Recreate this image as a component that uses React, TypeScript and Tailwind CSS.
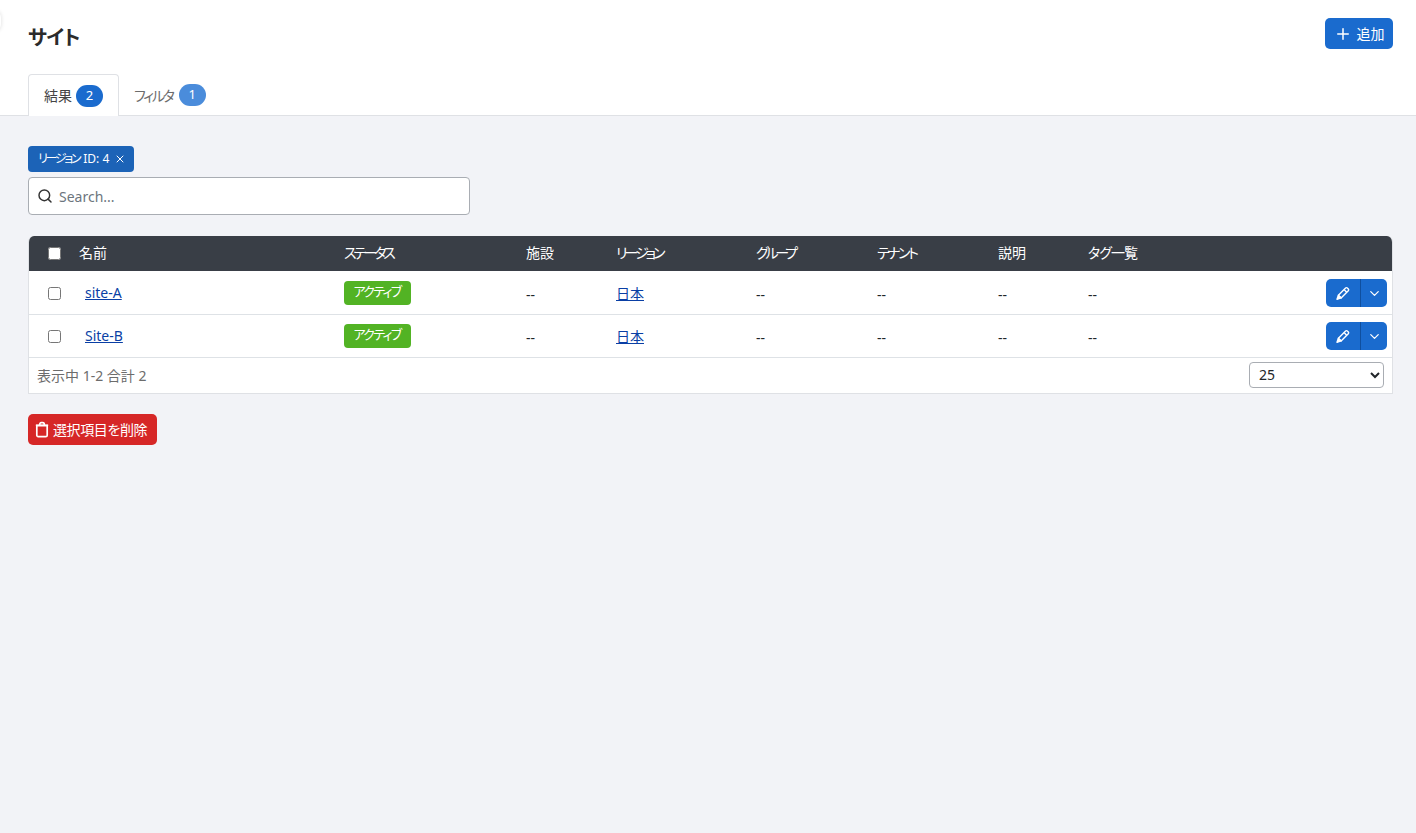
import { ChevronDown, Plus, Search, X } from "lucide-react";

const rows = [
  { name: "site-A" },
  { name: "Site-B" },
];

const headers = [
  { label: "ステータス", className: "tracking-[-3px]" },
  { label: "施設", className: "" },
  { label: "リージョン", className: "tracking-[-3px]" },
  { label: "グループ", className: "tracking-[-3.2px]" },
  { label: "テナント", className: "tracking-[-2.5px]" },
  { label: "説明", className: "" },
  { label: "タグ一覧", className: "tracking-[-1px]" },
];

function TrashIcon() {
  return (
    <svg viewBox="0 0 16 18" className="h-[17px] w-[16px]" fill="none" stroke="currentColor" strokeWidth="1.8">
      <path d="M2.5 5h11v10a1.5 1.5 0 0 1-1.5 1.5H4A1.5 1.5 0 0 1 2.5 15z" />
      <path d="M1.5 4.5h13M5.5 4c0-1.2.7-2.2 1.7-2.2h1.6c1 0 1.7 1 1.7 2.2" />
    </svg>
  );
}

function PencilIcon() {
  return (
    <svg viewBox="0 0 16 16" className="h-[16px] w-[16px]" fill="none" stroke="currentColor" strokeWidth="1.4" strokeLinejoin="round">
      <path d="M3.4 10.2 10.6 3a1.2 1.2 0 0 1 1.7 0l1 1a1.2 1.2 0 0 1 0 1.7l-7.2 7.2z" />
      <path d="m9 4.6 2.7 2.7" />
      <path d="M3.4 10.2 2 14.3l4.1-1.4z" fill="currentColor" />
    </svg>
  );
}

function Row({ name }: { name: string }) {
  const cell = "border-b border-[#dee2e6]";
  return (
    <tr className="h-[43px] bg-white text-[14px] text-[#212529]">
      <td className={`${cell} pb-[2px] text-center`}>
        <input type="checkbox" className="ml-[1px] h-[13px] w-[13px] align-middle" />
      </td>
      <td className={`${cell} pb-[2px] pl-[6px]`}>
        <a href="#" className="text-[#0a3fa5] underline">
          {name}
        </a>
      </td>
      <td className={cell}>
        <span className="flex h-[24px] w-[67px] items-center justify-center rounded-[4px] bg-[#52b324] pr-[1px] pb-[2px] text-[13px] tracking-[-1.7px] text-white">
          アクティブ
        </span>
      </td>
      <td className={`${cell} pt-[2px]`}>--</td>
      <td className={cell}>
        <a href="#" className="text-[#0a3fa5] underline">
          日本
        </a>
      </td>
      <td className={`${cell} pt-[2px]`}>--</td>
      <td className={`${cell} pt-[2px]`}>--</td>
      <td className={`${cell} pt-[2px]`}>--</td>
      <td className={`${cell} pt-[2px]`}>--</td>
      <td className={`${cell} pr-[5px]`}>
        <div className="flex justify-end">
          <button type="button" className="flex h-[28px] w-[35px] items-center justify-center rounded-l-[5px] border-r border-[#0f4f9e] bg-[#1a6bce] text-white">
            <PencilIcon />
          </button>
          <button type="button" className="flex h-[28px] w-[26px] items-center justify-center rounded-r-[5px] bg-[#1a6bce] text-white">
            <ChevronDown size={15} strokeWidth={2} />
          </button>
        </div>
      </td>
    </tr>
  );
}

export default function App() {
  return (
    <div className="relative min-h-[833px] overflow-hidden bg-[#f2f3f7] font-['Noto_Sans','Noto_Sans_CJK_JP',sans-serif] text-[#212529] [font-feature-settings:'palt']">
      <div className="absolute top-[10px] -left-[15px] h-[22px] w-[16px] rounded-full bg-white shadow-[0_0_4px_rgba(0,0,0,0.14)]" />

      <header className="h-[116px] border-b border-[#dfe1e5] bg-white pr-[23px] pl-[28px]">
        <div className="flex h-[74px] items-start justify-between">
          <h1 className="mt-[22px] text-[20px] leading-[32px] font-semibold tracking-[-0.7px] text-[#2b2b2b]">サイト</h1>
          <button type="button" className="mt-[18px] flex h-[31px] w-[68px] items-center justify-center gap-[5px] rounded-[5px] bg-[#1a6bce] text-[14px] text-white">
            <Plus size={18} strokeWidth={2} />
            追加
          </button>
        </div>
        <nav className="flex items-start text-[14px]">
          <div className="flex h-[42px] w-[91px] items-center justify-center gap-[4px] rounded-t-[4px] border border-b-0 border-[#dfe1e5] bg-white text-[#444]">
            結果
            <span className="flex h-[22px] w-[27px] items-center justify-center rounded-full bg-[#1a6bce] text-[13px] text-white">2</span>
          </div>
          <div className="flex h-[42px] items-center gap-[6px] pl-[15px] text-[#6c6c6c]">
            <span className="tracking-[-2.2px]">フィルタ</span>
            <span className="flex h-[22px] w-[27px] items-center justify-center rounded-full bg-[#4a8cdb] text-[13px] text-white">1</span>
          </div>
        </nav>
      </header>

      <main className="pt-[30px] pr-[23px] pl-[28px]">
        <span className="flex h-[26px] w-[106px] items-center gap-[5px] rounded-[4px] bg-[#1c63b7] pl-[10px] text-[12px] whitespace-nowrap text-white">
          <span>
            <span className="tracking-[-2.3px]">リージョン</span>
            <span className="ml-[4px]">ID: 4</span>
          </span>
          <X size={12} strokeWidth={2} />
        </span>

        <div className="mt-[5px] flex h-[38px] w-[442px] items-center gap-[6px] rounded-[4px] border border-[#a9adb3] bg-white pl-[8px]">
          <Search size={16} strokeWidth={2.2} className="text-[#333]" />
          <span className="text-[14px] text-[#6c757d]">Search...</span>
        </div>

        <div className="mt-[21px] overflow-hidden rounded-t-[6px] border-x border-b border-[#dfe1e5] bg-white">
          <table className="w-full table-fixed border-separate border-spacing-0">
            <colgroup>
              <col className="w-[50px]" />
              <col className="w-[265px]" />
              <col className="w-[182px]" />
              <col className="w-[90px]" />
              <col className="w-[140px]" />
              <col className="w-[121px]" />
              <col className="w-[121px]" />
              <col className="w-[90px]" />
              <col className="w-[120px]" />
              <col />
            </colgroup>
            <thead>
              <tr className="h-[36px] text-left text-[14px] text-white">
                <th className="border-b border-white bg-[#393e46] pb-[4px] text-center font-normal">
                  <input type="checkbox" className="ml-[1px] h-[13px] w-[13px] align-middle" />
                </th>
                <th className="border-b border-white bg-[#393e46] pb-[2px] font-normal">名前</th>
                {headers.map((h) => (
                  <th key={h.label} className={`border-b border-white bg-[#393e46] pb-[2px] font-normal ${h.className}`}>
                    {h.label}
                  </th>
                ))}
                <th className="border-b border-white bg-[#393e46]" />
              </tr>
            </thead>
            <tbody>
              {rows.map((row) => (
                <Row key={row.name} name={row.name} />
              ))}
            </tbody>
          </table>
          <div className="flex h-[35px] items-center justify-between px-[8px] text-[14px] text-[#6c6c6c]">
            <span>表示中 1-2 合計 2</span>
            <select defaultValue="25" className="mb-[2px] h-[26px] w-[135px] rounded-[4px] border border-[#a9adb3] bg-white pl-[5px] text-[14px] text-[#212529]">
              <option>25</option>
            </select>
          </div>
        </div>

        <button type="button" className="mt-[20px] flex h-[31px] w-[129px] items-center gap-[3px] rounded-[5px] bg-[#d62727] pb-[1px] pl-[6px] text-[14px] tracking-[-0.4px] text-white">
          <TrashIcon />
          選択項目を削除
        </button>
      </main>
    </div>
  );
}
